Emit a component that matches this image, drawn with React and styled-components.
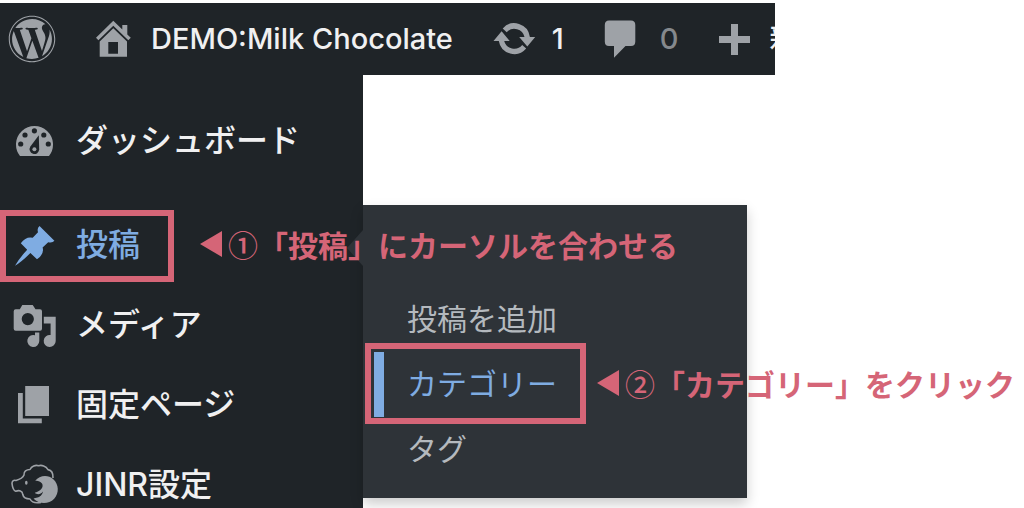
import styled, { createGlobalStyle } from 'styled-components';
import { FaWordpress } from 'react-icons/fa';

const HomeIcon = () => (
  <svg width="35" height="38" viewBox="0 0 35 38" fill="currentColor" aria-hidden="true">
    <path d="M17.3 .7 26.3 9.5V5H31.3V14.4L34.8 17.7 32.3 20.3 17.3 5.8 2.4 20.3 0 17.7Z" />
    <path fillRule="evenodd" d="M17.3 8.3 31 21.6V36.7H3.7V21.6ZM12.3 22V33.7H22V22Z" />
  </svg>
);

const UpdateIcon = () => (
  <svg width="43" height="34" viewBox="0 0 43 34" fill="currentColor" aria-hidden="true">
    <path d="M9.7 6.4A15.7 15.7 0 0 1 36.9 15H42.2L34.3 24.5 26.2 15H31.5A10.4 10.4 0 0 0 13.7 10.2Z" />
    <path d="M33.2 26.6A15.7 15.7 0 0 1 5.8 19H.5L8.6 9.2 16.7 19H11.2A10.4 10.4 0 0 0 29.2 23Z" />
  </svg>
);

const CommentIcon = () => (
  <svg width="32" height="38" viewBox="0 0 32 38" fill="currentColor" aria-hidden="true">
    <path d="M5 .5H27Q31.3 .5 31.3 5V21.5Q31.3 26 27 26H21.5L10 37.8V26H5Q.8 26 .8 21.5V5Q.8 .5 5 .5Z" />
  </svg>
);

const PlusIcon = () => (
  <svg width="31" height="31" viewBox="0 0 31 31" fill="currentColor" aria-hidden="true">
    <path d="M12 0H19V12H31V19H19V31H12V19H0V12H12Z" />
  </svg>
);

const DashboardIcon = () => (
  <svg width="50" height="50" viewBox="0 0 50 50" fill="currentColor" aria-hidden="true">
    <path d="M10 40A18.5 18.5 0 1 1 39 40Z" />
    <g fill="#1f2428">
      <circle cx="24.4" cy="14.8" r="2.6" />
      <circle cx="15" cy="19" r="2.6" />
      <circle cx="33.8" cy="19" r="2.6" />
      <circle cx="10.7" cy="28" r="2.6" />
      <circle cx="38.3" cy="28" r="2.6" />
      <path d="M28.8 19.3 29.2 33.3A4.8 4.8 0 1 1 20.4 30.6Z" />
    </g>
    <circle cx="24.4" cy="33.2" r="2" />
  </svg>
);

const PinIcon = () => (
  <svg width="50" height="50" viewBox="0 0 50 50" fill="currentColor" aria-hidden="true">
    <path d="M29.5 6 44.4 20.8Q42.5 23.2 38.2 22.2L32.6 27.4Q34.6 34 27 39.3L20.4 33Q12 41.5 5 45.8 9 38.5 17.2 29.8L10.8 23.3Q16 16.2 22.7 17.8L28 12.3Q26.8 8 29.5 6Z" />
  </svg>
);

const MediaIcon = () => (
  <svg width="50" height="50" viewBox="0 0 50 50" fill="currentColor" aria-hidden="true">
    <path
      fillRule="evenodd"
      d="M5.7 9.3H9.8L12.3 5H22.7L25.5 9.3H30Q32 9.3 32 11.3V28.7Q32 30.7 30 30.7H5.7Q3.7 30.7 3.7 28.7V11.3Q3.7 9.3 5.7 9.3ZM17.8 13A6.1 6.1 0 1 0 17.8 25.2 6.1 6.1 0 1 0 17.8 13Z"
    />
    <path d="M33.8 16.7H45.7V41A6 6 0 1 1 40.6 35.1V23.4H33.8Z" />
    <path d="M25 32.5H29.3V41A6 6 0 1 1 25 35.2Z" />
  </svg>
);

const PagesIcon = () => (
  <svg width="50" height="50" viewBox="0 0 50 50" fill="currentColor" aria-hidden="true">
    <path d="M15.2 6H39V36H15.2Z" />
    <path d="M8 13H12.8V38.6H31.8V43.3H8Z" />
  </svg>
);

const SheepIcon = () => (
  <svg width="50" height="50" viewBox="0 0 50 50" fill="currentColor" aria-hidden="true">
    <path
      d="M43 18C43.2 13.5 41.5 10.2 38 9.6 36 6 31.5 4.6 28.5 5.8 25.5 4.6 21.5 6.5 20 9.500 16.5 9.5 13.5 11.5 14 15 12.5 18.5 9.5 19.5 6 20.5 3.500 19.8 1.9 21 2 23.5 2.4 27 3.3 30.5 5.7 31.3 9 30 12.5 30.5 12.8 34.5 13.5 38 17 39 20 39 21.5 42 26 43.3 31 42.4"
      fill="none"
      stroke="currentColor"
      strokeWidth="1.6"
      strokeLinejoin="round"
    />
    <ellipse cx="16.3" cy="22.8" rx="1.3" ry="2" />
    <path d="M25.2 20.8C29.500 15.3 38 14.5 43.3 19.2 49 24.3 49.3 33 44.2 38.7 38.5 44.6 29 44.2 23.6 38.7 24.5 38 26 38 27.5 37.600 29.5 37 32.5 35 33 31.500 30.5 34.8 27 35 24.8 32.8 31 31 34 27 32 23.5 30 21 27.5 20.4 25.2 20.8Z" />
  </svg>
);

const menuItems = [
  { label: 'メディア', icon: MediaIcon },
  { label: '固定ページ', icon: PagesIcon },
  { label: 'JINR設定', icon: SheepIcon },
];

const App = () => {
  return (
    <Page>
      <GlobalStyle />
      <AdminBar>
        <BarLink href="#wordpress" aria-label="WordPress">
          <FaWordpress size={48} />
        </BarLink>
        <BarLink href="#site" $gap={20}>
          <HomeIcon />
          <BarText>DEMO:Milk Chocolate</BarText>
        </BarLink>
        <BarLink href="#updates" $gap={16}>
          <UpdateIcon />
          <BarText>1</BarText>
        </BarLink>
        <BarLink href="#comments" $gap={24}>
          <CommentIcon />
          <BarText $muted>0</BarText>
        </BarLink>
        <BarLink href="#new" $gap={20}>
          <PlusIcon />
          <BarText>新規</BarText>
        </BarLink>
      </AdminBar>
      <Sidebar>
        <Menu>
          <MenuItem>
            <MenuLink href="#dashboard">
              <DashboardIcon />
              <MenuText>ダッシュボード</MenuText>
            </MenuLink>
          </MenuItem>
          <Separator />
          <MenuItem>
            <MenuLink href="#posts" $active>
              <PinIcon />
              <MenuText $active>投稿</MenuText>
            </MenuLink>
            <Submenu>
              <SubmenuItem>
                <SubmenuLink href="#add">投稿を追加</SubmenuLink>
              </SubmenuItem>
              <SubmenuItem>
                <SubmenuLink href="#categories" $active>カテゴリー</SubmenuLink>
                <CategoryFrame />
                <CategoryNote>
                  <Pointer />
                  <span>
                    <Step>②</Step>「カテゴリー」をクリック
                  </span>
                </CategoryNote>
              </SubmenuItem>
              <SubmenuItem>
                <SubmenuLink href="#tags">タグ</SubmenuLink>
              </SubmenuItem>
            </Submenu>
            <PostsFrame />
            <PostsNote>
              <Pointer />
              <span>
                <Step>①</Step>「投稿」にカーソルを合わせる
              </span>
            </PostsNote>
          </MenuItem>
          {menuItems.map(({ label, icon: Icon }) => (
            <MenuItem key={label}>
              <MenuLink href={`#${label}`}>
                <Icon />
                <MenuText>{label}</MenuText>
              </MenuLink>
            </MenuItem>
          ))}
        </Menu>
      </Sidebar>
    </Page>
  );
};

const GlobalStyle = createGlobalStyle`
  * {
    box-sizing: border-box;
  }

  body {
    margin: 0;
    background-color: #fff;
    font-family: Inter, 'Noto Sans CJK JP', sans-serif;
  }
`;

const Page = styled.div`
  display: flex;
  flex-direction: column;
  align-items: flex-start;
  height: 100vh;
  padding-top: 3px;
  overflow: hidden;
`;

const AdminBar = styled.header`
  display: flex;
  flex-shrink: 0;
  align-items: center;
  gap: 40px;
  width: 100%;
  max-width: 775px;
  height: 72px;
  padding-left: 8px;
  overflow: hidden;
  background-color: #1f2428;
`;

const BarLink = styled.a`
  display: flex;
  flex-shrink: 0;
  align-items: center;
  gap: ${({ $gap }) => $gap || 0}px;
  color: #9ea2a7;
  text-decoration: none;
`;

const BarText = styled.span`
  color: ${({ $muted }) => ($muted ? '#85898d' : '#f0f0f1')};
  font-size: 29px;
  font-weight: 500;
  line-height: 40px;
`;

const Sidebar = styled.nav`
  flex: 1 0 auto;
  width: 363px;
  padding-top: 26px;
  background-color: #1f2428;
`;

const Menu = styled.ul`
  margin: 0;
  padding: 0;
  list-style: none;
`;

const MenuItem = styled.li`
  position: relative;
`;

const Separator = styled.li`
  height: 24px;
`;

const MenuLink = styled.a`
  display: flex;
  align-items: center;
  gap: 16px;
  height: 80px;
  padding-left: 10px;
  color: ${({ $active }) => ($active ? '#7face2' : '#9ea2a7')};
  text-decoration: none;
`;

const MenuText = styled.span`
  color: ${({ $active }) => ($active ? '#7face2' : '#f0f0f1')};
  font-size: 32px;
  font-weight: 500;
  line-height: 40px;
`;

const Submenu = styled.ul`
  position: absolute;
  top: 0;
  left: 100%;
  z-index: 1;
  width: 384px;
  margin: 0;
  padding: 82px 0 16px;
  background-color: #2e3338;
  box-shadow: 0 6px 12px rgba(0, 0, 0, 0.2);
  list-style: none;

  &::before {
    content: '';
    position: absolute;
    top: 25px;
    right: 100%;
    border: 18px solid transparent;
    border-left-width: 0;
    border-right: 16px solid #2e3338;
  }
`;

const SubmenuItem = styled.li`
  position: relative;
  padding-left: 11px;
`;

const SubmenuLink = styled.a`
  display: block;
  height: 65px;
  padding-left: 23px;
  border-left: 10px solid ${({ $active }) => ($active ? '#7face2' : 'transparent')};
  color: ${({ $active }) => ($active ? '#7face2' : '#b4b9be')};
  font-size: 30px;
  line-height: 65px;
  text-decoration: none;
`;

const Frame = styled.div`
  position: absolute;
  z-index: 2;
  border: 6px solid #d56577;
  pointer-events: none;
`;

const PostsFrame = styled(Frame)`
  top: 5px;
  left: 0;
  width: 174px;
  height: 72px;
`;

const CategoryFrame = styled(Frame)`
  top: -9px;
  left: 2px;
  width: 221px;
  height: 81px;
`;

const Note = styled.p`
  display: flex;
  align-items: center;
  gap: 6px;
  position: absolute;
  z-index: 3;
  margin: 0;
  color: #d56577;
  font-family: 'Noto Sans CJK JP', sans-serif;
  font-size: 30px;
  font-weight: 700;
  line-height: 40px;
  white-space: nowrap;
`;

const PostsNote = styled(Note)`
  top: 19px;
  left: 200px;
`;

const CategoryNote = styled(Note)`
  top: 11px;
  left: 234px;
`;

const Step = styled.span`
  font-weight: 500;
`;

const Pointer = styled.span`
  border: 13px solid transparent;
  border-left-width: 0;
  border-right: 22px solid #d56577;
`;

export default App;
